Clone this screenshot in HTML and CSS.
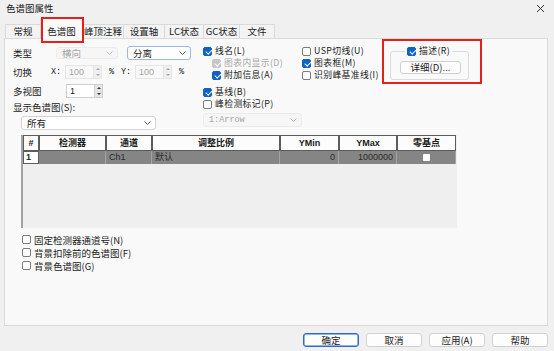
FILE: index.html
```html
<!DOCTYPE html>
<html lang="zh-CN">
<head>
    <meta charset="UTF-8">
    <meta name="viewport" content="width=device-width, initial-scale=1.0">
    <title>色谱图属性</title>
    <link rel="stylesheet" href="styles.css">
</head>
<body>
    <div class="dialog">
        <div class="titlebar">
            <span>色谱图属性</span>
            <svg class="close" width="9" height="9" viewBox="0 0 9 9"><path d="M1 1L8 8M8 1L1 8" stroke="#333" stroke-width="1"/></svg>
        </div>

        <div class="tabs">
            <div class="tab t1">常规</div>
            <div class="tab t2 active">色谱图</div>
            <div class="tab t3">峰顶注释</div>
            <div class="tab t4">设置轴</div>
            <div class="tab t5">LC状态</div>
            <div class="tab t6">GC状态</div>
            <div class="tab t7">文件</div>
        </div>

        <div class="panel">
            <div class="top">
                <!-- 左列：类型 / 切换 / 多视图 -->
                <div class="col-left">
                    <div class="row r1">
                        <span class="lbl-type">类型</span>
                        <div class="select disabled s-type">
                            <span>横向</span>
                            <svg class="chev" width="7" height="4" viewBox="0 0 7 4"><polyline points="0.5,0.5 3.5,3.5 6.5,0.5" fill="none" stroke="currentColor"/></svg>
                        </div>
                        <div class="select focus s-mode">
                            <span>分离</span>
                            <svg class="chev" width="7" height="4" viewBox="0 0 7 4"><polyline points="0.5,0.5 3.5,3.5 6.5,0.5" fill="none" stroke="currentColor"/></svg>
                        </div>
                    </div>

                    <div class="row r2">
                        <span class="lbl-switch">切换</span>
                        <span class="axis">X:</span>
                        <div class="spin disabled">
                            <div class="spin-field">100</div>
                            <div class="spin-btns"><span class="up"></span><span class="down"></span></div>
                        </div>
                        <span class="pct">%</span>
                        <span class="axis">Y:</span>
                        <div class="spin disabled">
                            <div class="spin-field">100</div>
                            <div class="spin-btns"><span class="up"></span><span class="down"></span></div>
                        </div>
                        <span class="pct">%</span>
                    </div>

                    <div class="row r3">
                        <span class="lbl-multi">多视图</span>
                        <div class="spin">
                            <div class="spin-field">1</div>
                            <div class="spin-btns"><span class="up"></span><span class="down"></span></div>
                        </div>
                    </div>

                    <div class="caption">显示色谱图(S):</div>
                    <div class="select s-all">
                        <span>所有</span>
                        <svg class="chev" width="7" height="4" viewBox="0 0 7 4"><polyline points="0.5,0.5 3.5,3.5 6.5,0.5" fill="none" stroke="currentColor"/></svg>
                    </div>
                </div>

                <!-- 中列 -->
                <div class="col-mid">
                    <div class="check tight"><span class="cb on"></span>线名(L)</div>
                    <div class="check tight indent disabled"><span class="cb dis"></span>图表内显示(D)</div>
                    <div class="check tight indent"><span class="cb on"></span>附加信息(A)</div>
                    <div class="check tight gap"><span class="cb on"></span>基线(B)</div>
                    <div class="check tight"><span class="cb"></span>峰检测标记(P)</div>
                    <div class="select disabled s-arrow">
                        <span class="mono">1:Arrow</span>
                        <svg class="chev" width="7" height="4" viewBox="0 0 7 4"><polyline points="0.5,0.5 3.5,3.5 6.5,0.5" fill="none" stroke="currentColor"/></svg>
                    </div>
                </div>

                <!-- 右列 -->
                <div class="col-right">
                    <div class="check tight"><span class="cb"></span>USP切线(U)</div>
                    <div class="check tight"><span class="cb on"></span>图表框(M)</div>
                    <div class="check tight"><span class="cb"></span>识别峰基准线(I)</div>
                </div>

                <div class="note-wrap">
                    <fieldset class="group">
                        <legend><span class="check tight"><span class="cb on"></span>描述(R)</span></legend>
                        <button class="btn-detail">详细(D)...</button>
                    </fieldset>
                </div>
            </div>

            <div class="grid">
                <table>
                    <colgroup>
                        <col class="c-idx"><col class="c-det"><col class="c-ch"><col class="c-scale">
                        <col class="c-min"><col class="c-max"><col class="c-zero">
                    </colgroup>
                    <tr class="head">
                        <th>#</th>
                        <th>检测器</th>
                        <th>通道</th>
                        <th>调整比例</th>
                        <th>YMin</th>
                        <th>YMax</th>
                        <th>零基点</th>
                    </tr>
                    <tr class="data">
                        <td class="rowhead">1</td>
                        <td></td>
                        <td>Ch1</td>
                        <td>默认</td>
                        <td class="num">0</td>
                        <td class="num">1000000</td>
                        <td class="center"><span class="mini-box"></span></td>
                    </tr>
                </table>
            </div>

            <div class="options">
                <div class="check"><span class="cb"></span>固定检测器通道号(N)</div>
                <div class="check"><span class="cb"></span>背景扣除前的色谱图(F)</div>
                <div class="check"><span class="cb"></span>背景色谱图(G)</div>
            </div>
        </div>

        <div class="footer">
            <button class="btn default">确定</button>
            <button class="btn">取消</button>
            <button class="btn">应用(A)</button>
            <button class="btn">帮助</button>
        </div>
    </div>
</body>
</html>
```

FILE: styles.css
```css
* {
    margin: 0;
    padding: 0;
    box-sizing: border-box;
}

body {
    background: #f0f0f0;
    font-family: "Noto Sans CJK SC", sans-serif;
    font-size: 9.5px;
    line-height: 12px;
    color: #1b1b1b;
}

.dialog {
    width: 554px;
    height: 351px;
    display: flex;
    flex-direction: column;
}

/* 标题栏 */
.titlebar {
    height: 16px;
    display: flex;
    align-items: center;
    justify-content: space-between;
    padding: 0 9px 0 6px;
}

.close {
    display: block;
}

/* 选项卡 */
.tabs {
    height: 22px;
    display: flex;
    align-items: flex-end;
    padding-left: 5px;
    position: relative;
    z-index: 1;
}

.tab {
    height: 14px;
    line-height: 13px;
    text-align: center;
    white-space: nowrap;
    background: #f3f3f3;
    border: 1px solid #dadada;
    border-bottom: none;
    margin-right: -1px;
}

.tab.t1 { width: 36px; }
.tab.t2 { width: 43px; }
.tab.t3 { width: 42px; }
.tab.t4 { width: 42px; }
.tab.t5 { width: 40px; }
.tab.t6 { width: 37px; }
.tab.t7 { width: 36px; }

.tab.active {
    height: 21px;
    margin-bottom: -1px;
    padding-top: 6px;
    background: #f9f9f9;
    position: relative;
}

.tab.active::after {
    content: "";
    position: absolute;
    left: 0;
    right: -2px;
    top: -2px;
    bottom: -4px;
    border: 2px solid #e3211b;
}

/* 面板 */
.panel {
    margin: 0 6px 0 4px;
    height: 288px;
    background: #f9f9f9;
    border: 1px solid #dcdcdc;
    padding: 6px 0 0 8px;
}

.top {
    display: flex;
    align-items: flex-start;
}

.col-left { width: 190px; }
.col-mid { width: 99px; }
.col-right { width: 80px; }

.row {
    display: flex;
    align-items: center;
}

.r1 { height: 16px; }
.r2 { height: 14px; margin-top: 4px; }
.r3 { height: 14px; margin-top: 5px; }

.lbl-type { width: 43px; }
.lbl-switch { width: 38px; }
.lbl-multi { width: 53px; }

.axis {
    width: 14px;
    font-family: "Liberation Mono", monospace;
    font-size: 8.5px;
}

.pct {
    width: 12px;
    margin-left: 7px;
    font-family: "Liberation Mono", monospace;
    font-size: 8.5px;
}

.caption {
    height: 12px;
    margin-top: 3px;
}

/* 下拉框 */
.select {
    height: 14px;
    display: flex;
    align-items: center;
    justify-content: space-between;
    padding: 0 4px 0 5px;
    background: #fff;
    border: 1px solid #d4d4d4;
    border-radius: 3px;
    color: #1b1b1b;
}

.select .chev {
    color: #555;
    flex: none;
}

.select.disabled {
    background: #f6f6f6;
    border-color: #ececec;
    color: #a6a6a6;
}

.select.disabled .chev { color: #bdbdbd; }

.select.focus { border-color: #a3b7dc; }

.s-type { width: 62px; height: 12px; }
.s-mode { width: 64px; margin-left: 9px; }
.s-all { width: 135px; margin: 3px 0 0 8px; }
.s-arrow { width: 99px; margin-top: 3px; }

.mono {
    font-family: "Liberation Mono", monospace;
    font-size: 8.5px;
}

/* 数值框 */
.spin {
    display: flex;
    width: 37px;
    height: 14px;
}

.spin-field {
    flex: 1;
    background: #fff;
    border: 1px solid #cfcfcf;
    border-right: none;
    padding-left: 3px;
    line-height: 12px;
    font-family: "Liberation Sans", sans-serif;
    font-size: 9px;
}

.spin-btns {
    width: 9px;
    display: flex;
    flex-direction: column;
    background: #e6e6e6;
    border: 1px solid #cfcfcf;
}

.spin-btns span {
    flex: 1;
    display: flex;
    align-items: center;
    justify-content: center;
}

.spin-btns span::before {
    content: "";
    border-left: 2px solid transparent;
    border-right: 2px solid transparent;
}

.spin-btns .up::before { border-bottom: 2px solid #333; }
.spin-btns .down::before { border-top: 2px solid #333; }

.spin.disabled .spin-field {
    background: #f8f8f8;
    border-color: #e6e6e6;
    color: #a5a5a5;
}

.spin.disabled .spin-btns {
    background: #efefef;
    border-color: #e6e6e6;
}

.spin.disabled .up::before { border-bottom-color: #a8a8a8; }
.spin.disabled .down::before { border-top-color: #a8a8a8; }

/* 复选框 */
.check {
    display: flex;
    align-items: center;
    height: 12px;
    white-space: nowrap;
}

/* 12px 行距的复选框：字号略小，靠字距补回宽度 */
.check.tight {
    font-size: 8.8px;
    letter-spacing: 0.4px;
}

.check.disabled { color: #a8a8a8; }
.indent { margin-left: 9px; }
.gap { margin-top: 5px; }

.cb {
    width: 9px;
    height: 9px;
    flex: none;
    margin-right: 3px;
    background: #fff;
    border: 1px solid #7b7b7b;
    border-radius: 2px;
    position: relative;
}

.cb.on {
    background: #0f62c5;
    border-color: #0f62c5;
}

.cb.dis {
    background: #c6c6c6;
    border-color: #c6c6c6;
}

.cb.on::after,
.cb.dis::after {
    content: "";
    position: absolute;
    left: 2.5px;
    top: 0.5px;
    width: 2.5px;
    height: 5px;
    border: solid #fff;
    border-width: 0 1.2px 1.2px 0;
    transform: rotate(45deg);
}

/* 描述分组（红框标注） */
.note-wrap {
    width: 100px;
    margin-top: -6px;
    border: 2px solid #e3211b;
    padding: 4px 0 2px 6px;
}

.group {
    width: 79px;
    border: 1px solid #dcdcdc;
    border-radius: 3px;
    padding: 4px 0 5px 9px;
}

.group legend {
    margin-left: 5px;
    padding: 0 2px;
}

.btn-detail {
    width: 61px;
    height: 13px;
    font: inherit;
    line-height: 11px;
    color: #1b1b1b;
    background: #fdfdfd;
    border: 1px solid #d0d0d0;
    border-radius: 3px;
    display: block;
}

/* 表格 */
.grid {
    width: 436px;
    height: 93px;
    margin: 5px 0 0 8px;
    background: #efefef;
    border-left: 2px solid #a3a3a3;
}

.grid table {
    width: 433px;
    table-layout: fixed;
    border-collapse: separate;
    border-spacing: 0;
    font-family: "Liberation Sans", "Noto Sans CJK SC", sans-serif;
    font-size: 9px;
}

.c-idx { width: 16px; }
.c-det { width: 67px; }
.c-ch { width: 46px; }
.c-scale { width: 128px; }
.c-min { width: 59px; }
.c-max { width: 58px; }
.c-zero { width: 59px; }

.head th {
    height: 16px;
    line-height: 12px;
    background: #fcfcfc;
    border: 1px solid #5c5c5c;
    font-weight: bold;
    color: #1a1a1a;
}

.data td {
    height: 12px;
    line-height: 11px;
    padding: 0 3px;
    background: #858585;
    border-right: 1px solid #a3a3a3;
    color: #2b2b2b;
    white-space: nowrap;
}

.data td.rowhead {
    background: #fff;
    border: 1px solid #5c5c5c;
    font-weight: bold;
    padding: 0 2px;
}

.data td.num { text-align: right; }
.data td.center { text-align: center; }

.mini-box {
    display: inline-block;
    width: 7px;
    height: 7px;
    background: #fff;
    border-radius: 1px;
    vertical-align: middle;
}

.options {
    margin: 5px 0 0 9px;
}

.options .check { height: 13px; }

/* 底部按钮 */
.footer {
    display: flex;
    justify-content: flex-end;
    gap: 7px;
    padding: 7px 6px 0 0;
}

.btn {
    width: 56px;
    height: 14px;
    font: inherit;
    line-height: 12px;
    color: #1b1b1b;
    background: #fdfdfd;
    border: 1px solid #d1d1d1;
    border-radius: 3px;
}

.btn.default {
    border-color: #2b6ccb;
    box-shadow: inset 0 0 0 0.5px #2b6ccb;
}
```
